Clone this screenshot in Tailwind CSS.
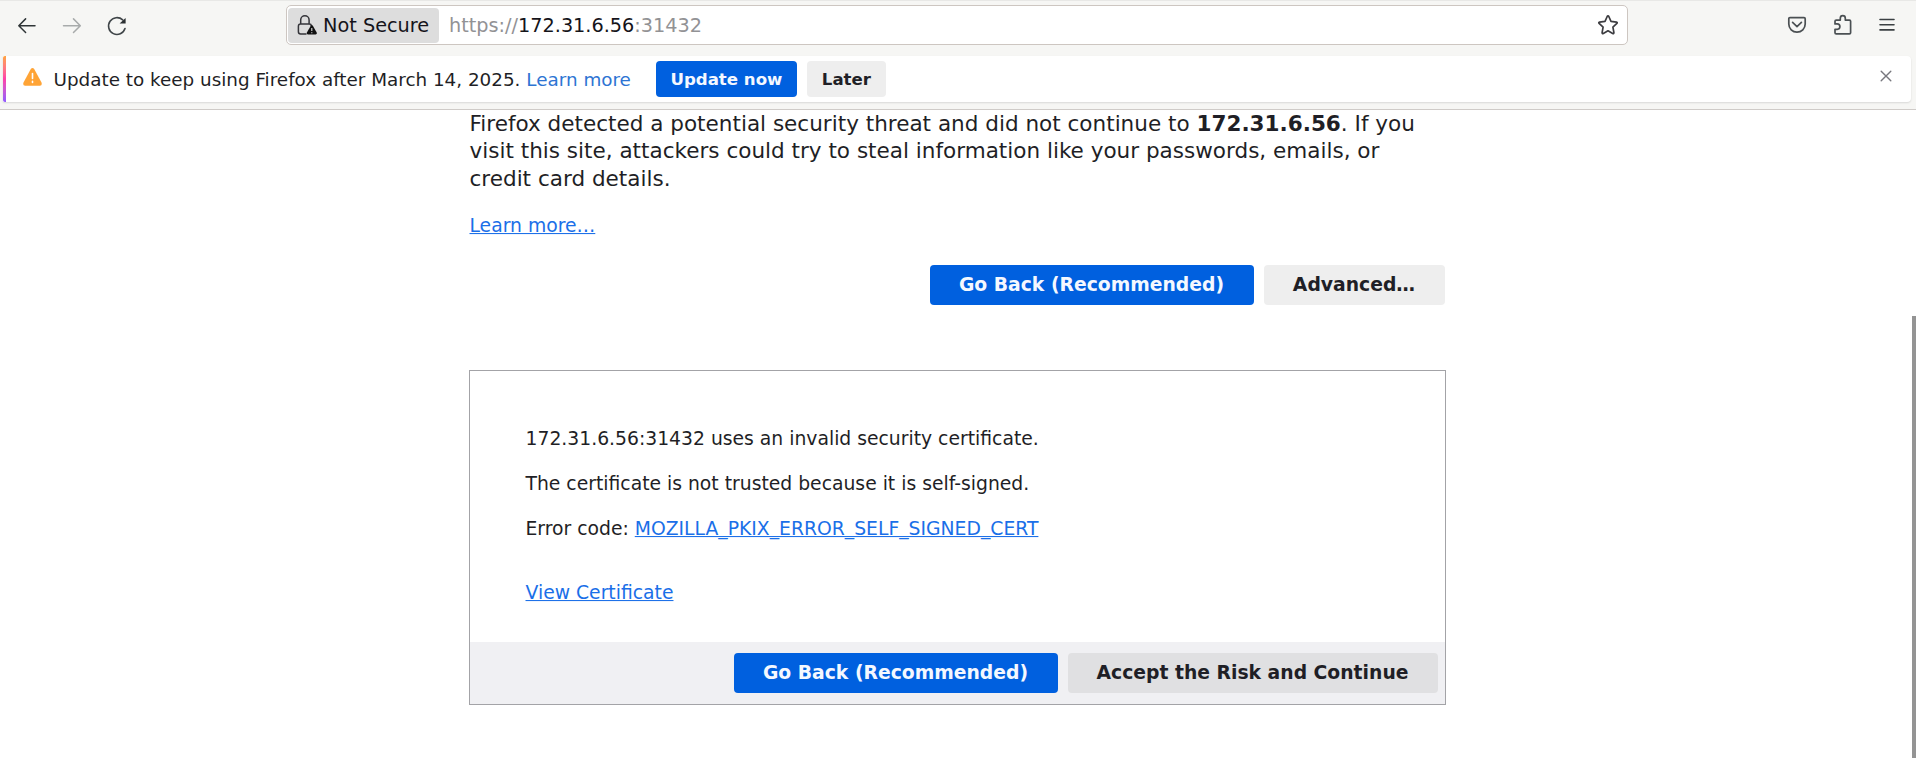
<!DOCTYPE html>
<html lang="en">
<head>
<meta charset="utf-8">
<title>Warning: Potential Security Risk Ahead</title>
<script src="https://cdn.jsdelivr.net/npm/@tailwindcss/browser@4"></script>
</head>
<body class="h-[758px] overflow-hidden bg-white font-['DejaVu_Sans',sans-serif] text-[#1f1f26]">
<div class="relative h-full">
  <header class="flex h-[110px] flex-col border-t border-b border-t-[#e8e8e6] border-b-[#cfcbc8] bg-[#f6f6f4]">
    <!-- Toolbar -->
    <div class="flex h-[55px] shrink-0 items-start pt-1 text-[#3d4245]">
      <nav class="flex h-10 w-[286px] shrink-0 items-center gap-[26px] pl-[17px]">
        <svg class="size-5" viewBox="0 0 20 20" fill="none" stroke="#2f3537" stroke-width="1.5" stroke-linecap="round" stroke-linejoin="round"><path d="M18 10.7H2M8.6 3.9 1.8 10.7l6.8 6.8"/></svg>
        <svg class="size-5 overflow-visible" viewBox="0 0 20 20" fill="none" stroke="#a8abab" stroke-width="1.5" stroke-linecap="round" stroke-linejoin="round"><path d="M.5 10.7H17M10.5 3.9l6.8 6.8-6.8 6.8"/></svg>
        <svg class="-ml-[3px] size-5 overflow-visible" viewBox="0 0 20 20" fill="none" stroke="#3f4548" stroke-width="1.6" stroke-linecap="round"><path d="M19 13.5A8.4 8.4 0 1 1 16.7 4.9"/><path d="M19.6 3v5.6h-6z" fill="#2a2f31" stroke="none"/></svg>
      </nav>
      <div class="flex h-10 w-[1342px] shrink-0 items-center rounded-[5px] border border-[#cdc6c1] bg-white pl-[1px]">
        <div class="flex h-[35px] w-[151px] items-center rounded-[4px] bg-[#dddddd] pl-[9px]">
          <svg class="h-[22px] w-5 shrink-0" viewBox="0 0 20 22" fill="none"><path d="M9 20H3.6Q1.4 20 1.4 17.8v-5.6Q1.4 10 3.6 10h8.6q2 0 2 1.7M3.7 10V6a4.2 4.2 0 0 1 8.4 0v4" stroke="#35353a" stroke-width="1.5" stroke-linecap="round"/><path d="M13.9 11.6q.9-1.4 1.8 0l4 7q.6 1.6-1 1.8h-7.8q-1.6-.2-1-1.8z" fill="#111"/><path d="M14.8 14v3M14.8 18.2v1.1" stroke="#ddd" stroke-width="1.1"/></svg>
          <span class="ml-[6px] pt-[2px] text-[19.3px] leading-6 whitespace-nowrap text-[#15141a]">Not Secure</span>
        </div>
        <div class="ml-[10px] flex-1 pt-[2px] text-[19.25px] leading-6 whitespace-nowrap text-[#929295]">https://<span class="text-[#15141a]">172.31.6.56</span>:31432</div>
        <svg class="mr-[9px] size-[20px] overflow-visible" viewBox="0 0 20 20" fill="none" stroke="#3d3d41" stroke-width="1.7" stroke-linejoin="round"><path d="M10 .9q.5 0 .8.6l2.2 4.9 5.5.7q1.2.3.4 1.3l-4 3.7 1 5.5q0 1.3-1.2.8L10 15.8l-4.7 2.6q-1.2.5-1.2-.8l1-5.5-4-3.7q-.8-1 .4-1.3l5.5-.7 2.2-4.9q.3-.6.8-.6z"/></svg>
      </div>
      <div class="flex h-10 flex-1 items-center pl-[160px]">
        <svg class="h-[18px] w-[18px] overflow-visible" viewBox="0 0 18 18" fill="none" stroke="#4b5053" stroke-width="1.7" stroke-linecap="round" stroke-linejoin="round"><path d="M2 1.6h14q1.2 0 1.2 1.2V8a8.2 8.2 0 0 1-16.4 0V2.8Q.8 1.6 2 1.6z"/><path d="m4.6 6.4 4.4 4.2 4.4-4.2"/></svg>
        <svg class="ml-[28px] h-5 w-[18px] overflow-visible" viewBox="0 0 18 20" fill="none" stroke="#4b5053" stroke-width="1.7" stroke-linejoin="round"><path d="M1 8.3V6.3q0-1.2 1.2-1.2h4.1V3.2a2.5 2.5 0 0 1 5 0v1.9h4.1q1.2 0 1.2 1.2v11.4q0 1.2-1.2 1.2H2.2Q1 18.900 1 17.700v-3.400h2.200a2.700 2.700 0 0 0 0-5.400H1z"/></svg>
        <svg class="ml-[27px] h-[14px] w-4" viewBox="0 0 16 14" fill="none" stroke="#3b4043" stroke-width="1.6" stroke-linecap="round"><path d="M1 1.500h14M1 6.700h14M1 11.900h14"/></svg>
      </div>
    </div>
    <!-- Notification bar -->
    <div class="mr-[5px] ml-[3px] flex h-[46px] shrink-0 items-center rounded-r-[4px] bg-white shadow-[0_1px_2px_rgba(0,0,0,0.12)]">
      <div class="h-full w-[3px] rounded-l-[2px] bg-linear-to-b from-[#ffa33a] via-[#ff3fa8] to-[#9059ff]"></div>
      <svg class="mb-[5px] ml-[17px] h-[18px] w-[19px]" viewBox="0 0 19 18"><path d="M7.800 1.100q1.700-2 3.400 0l7.300 13.500q1 2.700-1.600 3.200H2.100Q-.5 17.300.5 14.600z" fill="#ffa436"/><path d="M9.500 5.500v5M9.500 13.200v1.200" stroke="#fff" stroke-width="1.600" stroke-linecap="round"/></svg>
      <p class="ml-[11.5px] pt-[2px] text-[18.350px] leading-6 whitespace-nowrap">Update to keep using Firefox after March 14, 2025. <a class="text-[#2d74d3]">Learn more</a></p>
      <button class="ml-[25px] h-9 w-[141px] rounded-[4px] bg-[#0060df] pt-px text-[16.600px] leading-6 font-bold text-[#f4f8ff]">Update now</button>
      <button class="ml-[10px] h-9 w-[79px] rounded-[4px] bg-[#eeeeee] pt-px text-[16.600px] leading-6 font-bold">Later</button>
      <svg class="mr-[19px] mb-[6px] ml-auto size-3" viewBox="0 0 12 12" stroke="#77777e" stroke-width="1.400" stroke-linecap="round"><path d="m1.200 1.200 9.600 9.600M10.800 1.200l-9.600 9.600"/></svg>
    </div>
  </header>

  <main class="ml-[468.5px] w-[977px] text-[18.780px] leading-6">
    <p class="pl-[1px] text-[21.540px] leading-[27.400px] whitespace-nowrap">Firefox detected a potential security threat and did not continue to <b>172.31.6.56</b>. If you<br>visit this site, attackers could try to steal information like your passwords, emails, or<br>credit card details.</p>
    <p class="mt-[22px] origin-[0_18.5px] scale-y-[1.05] pl-[1px]"><a class="text-[#1a6fe8] underline">Learn more…</a></p>
    <div class="mt-[26.800px] flex justify-end gap-[10px] pr-[1px] font-bold">
      <button class="h-10 w-[324px] rounded-[4px] bg-[#0060df] text-[#f4f8ff]">Go Back (Recommended)</button>
      <button class="h-10 w-[181px] rounded-[4px] bg-[#eeeeee]">Advanced…</button>
    </div>
    <section class="mt-[65px] flex h-[335px] flex-col border border-[#a3a3a7]">
      <div class="flex flex-1 flex-col gap-[21px] pt-[56px] pl-[56px] whitespace-nowrap">
        <p class="origin-[0_18.5px] scale-y-[1.05]">172.31.6.56:31432 uses an invalid security certificate.</p>
        <p class="origin-[0_18.5px] scale-y-[1.05]">The certificate is not trusted because it is self-signed.</p>
        <p class="origin-[0_18.5px] scale-y-[1.05]">Error code: <a class="text-[#1a6fe8] underline [text-decoration-skip-ink:none]">MOZILLA_PKIX_ERROR_SELF_SIGNED_CERT</a></p>
        <p class="mt-[19px] origin-[0_18.5px] scale-y-[1.05]"><a class="text-[#1a6fe8] underline">View Certificate</a></p>
      </div>
      <div class="flex h-[62px] shrink-0 items-center justify-end gap-[10px] bg-[#f0f0f3] pr-[7px] font-bold">
        <button class="h-10 w-[324px] rounded-[4px] bg-[#0060df] text-[#f4f8ff]">Go Back (Recommended)</button>
        <button class="h-10 w-[370px] rounded-[4px] bg-[#e0e0e2]">Accept the Risk and Continue</button>
      </div>
    </section>
  </main>

  <!-- Scrollbar thumb over the page edge -->
  <div class="absolute top-[316px] right-0 bottom-0 w-[4px] bg-[#949494]"></div>
</div>
</body>
</html>
